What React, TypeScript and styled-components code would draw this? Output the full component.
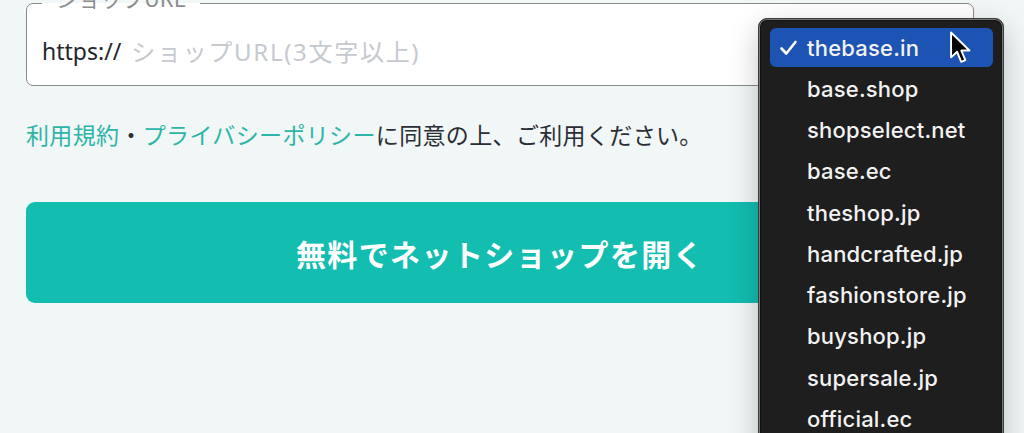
import React from "react";
import styled, { createGlobalStyle } from "styled-components";

const Global = createGlobalStyle`
  html, body { margin: 0; padding: 0; }
  body {
    background: #f1f6f6;
    font-family: "Noto Sans", "Noto Sans CJK JP", sans-serif;
    overflow: hidden;
  }
`;

const Page = styled.div`
  position: relative;
  width: 1024px;
  height: 433px;
  overflow: hidden;
`;

const Form = styled.form`
  width: 948px;
  padding-left: 26px;
  display: flex;
  flex-direction: column;
`;

const Field = styled.fieldset`
  margin: -14px 0 0 0;
  padding: 0 15px 3px 15px;
  border: 1.5px solid #8a8a8a;
  border-radius: 7px;
  background: #ffffff;
  min-width: 0;
`;

const Legend = styled.legend`
  padding: 0 14px 12px 14px;
  font-family: "Noto Sans CJK JP", sans-serif;
  font-size: 22px;
  line-height: 22px;
  color: #8d8d8d;
`;

const InputRow = styled.div`
  display: flex;
  align-items: center;
  height: 62px;
  gap: 10px;
`;

const Prefix = styled.span`
  font-family: "Noto Sans", "Noto Sans CJK JP", sans-serif;
  font-size: 23px;
  color: #22262c;
`;

const TextInput = styled.input`
  flex: 1;
  border: none;
  outline: none;
  background: transparent;
  font-family: "Noto Sans", "Noto Sans CJK JP", sans-serif;
  font-size: 24px;
  letter-spacing: 1.7px;
  color: #22262c;
  padding: 0;
  &::placeholder { color: #c6c9ce; }
`;

const Terms = styled.p`
  margin: 31px 0 0 0;
  font-family: "Noto Sans CJK JP", sans-serif;
  font-size: 23px;
  line-height: 35px;
  color: #2a2e35;
  letter-spacing: 0.35px;
`;

const Link = styled.a`
  color: #2db5a8;
  text-decoration: none;
`;

const Submit = styled.button`
  margin-top: 50px;
  height: 101px;
  border: none;
  border-radius: 9px;
  background: #13bdb0;
  color: #ffffff;
  font-family: "Noto Sans CJK JP", sans-serif;
  font-weight: 700;
  font-size: 30px;
  letter-spacing: 1.4px;
  cursor: pointer;
`;

const Menu = styled.ul`
  position: absolute;
  left: 758px;
  top: 18px;
  width: 246px;
  height: 460px;
  box-sizing: border-box;
  margin: 0;
  padding: 8px 10px 0 11px;
  list-style: none;
  background: #1e1e1e;
  border: 1px solid #3a3a3a;
  border-radius: 9px;
  box-shadow: 0 0 0 1px #7c7c7c inset, 0 0 0 2px #111 inset, 0 10px 30px rgba(0, 0, 0, 0.22);
`;

const Option = styled.li<{ $selected?: boolean }>`
  display: flex;
  align-items: center;
  height: 41.25px;
  box-sizing: border-box;
  padding: 1px 0;
  font-family: "Inter", "Liberation Sans", sans-serif;
  font-size: 22px;
  letter-spacing: 0.2px;
  font-weight: 500;
  color: #f2f2f2;
  & > span {
    display: flex;
    align-items: center;
    width: 100%;
    height: 100%;
    border-radius: 6px;
    background: ${(p) => (p.$selected ? "#1d54b3" : "transparent")};
  }
`;

const Check = styled.span`
  width: 37px;
  flex: none;
  display: inline-flex;
  justify-content: center;
`;

const Pointer = styled.svg`
  position: absolute;
  left: 949px;
  top: 31px;
`;

const domains = [
  "thebase.in",
  "base.shop",
  "shopselect.net",
  "base.ec",
  "theshop.jp",
  "handcrafted.jp",
  "fashionstore.jp",
  "buyshop.jp",
  "supersale.jp",
  "official.ec",
];

export default function App() {
  return (
    <Page>
      <Global />
      <Form onSubmit={(e) => e.preventDefault()}>
        <Field>
          <Legend>ショップURL</Legend>
          <InputRow>
            <Prefix>https://</Prefix>
            <TextInput placeholder="ショップURL(3文字以上)" />
          </InputRow>
        </Field>
        <Terms>
          <Link href="#">利用規約</Link>・<Link href="#">プライバシーポリシー</Link>
          に同意の上、ご利用ください。
        </Terms>
        <Submit type="submit">無料でネットショップを開く</Submit>
      </Form>
      <Menu>
        {domains.map((d, i) => (
          <Option key={d} $selected={i === 0}>
            <span>
              <Check>
                {i === 0 ? (
                  <svg width="19" height="16" viewBox="0 0 18 16">
                    <path d="M2 8.5 L6.8 13.5 L16 2" fill="none" stroke="#fff" strokeWidth="2.6" strokeLinecap="round" strokeLinejoin="round" />
                  </svg>
                ) : null}
              </Check>
              {d}
            </span>
          </Option>
        ))}
      </Menu>
      <Pointer width="26" height="36" viewBox="0 0 20 28">
        <path d="M1.5 1.2 L1.5 20.5 L6.2 16.2 L9.4 24 L12.6 22.6 L9.5 15.2 L15.8 15.2 Z" fill="#000" stroke="#fff" strokeWidth="1.5" strokeLinejoin="round" />
      </Pointer>
    </Page>
  );
}
